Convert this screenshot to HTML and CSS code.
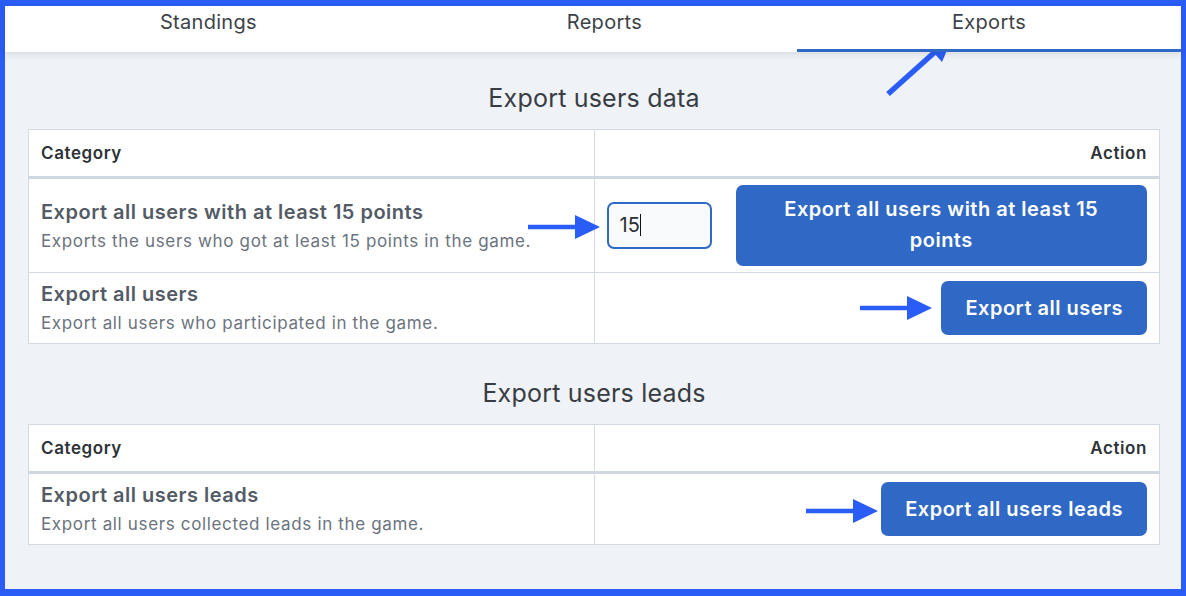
FILE: index.html
```html
<!DOCTYPE html>
<html lang="en">

<head>
  <meta charset="UTF-8" />
  <title>Game Admin - Exports</title>
  <link rel="stylesheet" href="styles.css">
</head>

<body>
  <div class="frame">
    <!-- Tabs -->
    <nav class="tabs">
      <a class="tab">Standings</a>
      <a class="tab">Reports</a>
      <a class="tab active">Exports</a>
    </nav>

    <main class="content">
      <!-- Users data -->
      <section class="export-block">
        <h2>Export users data</h2>
        <table class="export-table">
          <thead>
            <tr>
              <th>Category</th>
              <th class="action-col">Action</th>
            </tr>
          </thead>
          <tbody>
            <tr class="row-tall">
              <td>
                <div class="item-title">Export all users with at least 15 points</div>
                <div class="item-desc">Exports the users who got at least 15 points in the game.</div>
              </td>
              <td>
                <div class="actions">
                  <div class="points-input">15<span class="caret"></span></div>
                  <button class="btn btn-grow">Export all users with at least 15 points</button>
                </div>
              </td>
            </tr>
            <tr>
              <td>
                <div class="item-title">Export all users</div>
                <div class="item-desc">Export all users who participated in the game.</div>
              </td>
              <td>
                <div class="actions">
                  <button class="btn">Export all users</button>
                </div>
              </td>
            </tr>
          </tbody>
        </table>
      </section>

      <!-- Users leads -->
      <section class="export-block">
        <h2>Export users leads</h2>
        <table class="export-table">
          <thead>
            <tr>
              <th>Category</th>
              <th class="action-col">Action</th>
            </tr>
          </thead>
          <tbody>
            <tr>
              <td>
                <div class="item-title">Export all users leads</div>
                <div class="item-desc">Export all users collected leads in the game.</div>
              </td>
              <td>
                <div class="actions">
                  <button class="btn">Export all users leads</button>
                </div>
              </td>
            </tr>
          </tbody>
        </table>
      </section>
    </main>
  </div>

  <!-- annotation arrows drawn over the page -->
  <svg class="annotations" width="1186" height="596" viewBox="0 0 1186 596">
    <g fill="#2a5cf6" stroke="#2a5cf6">
      <line x1="888" y1="94" x2="936" y2="51" stroke-width="5.5" />
      <polygon points="953,36 926,44 942,62" stroke="none" />

      <line x1="528" y1="227" x2="578" y2="227" stroke-width="4.5" />
      <polygon points="575,215 600,227 575,239" stroke="none" />

      <line x1="860" y1="308" x2="910" y2="308" stroke-width="4.5" />
      <polygon points="907,296 932,308 907,320" stroke="none" />

      <line x1="806" y1="511" x2="856" y2="511" stroke-width="4.5" />
      <polygon points="853,499 878,511 853,523" stroke="none" />
    </g>
  </svg>
</body>

</html>
```

FILE: styles.css
```css
:root {
  --frame: #2a5cf6;
  --bg: #eff2f7;
  --line: #d3dae3;
  --primary: #3068c5;
  --text: #3b4046;
  --muted: #6b737e;
}
* {
  box-sizing: border-box;
  margin: 0;
  padding: 0;
}
body {
  position: relative;
  width: 1186px;
  height: 596px;
  overflow: hidden;
  font-family: Inter, "Noto Sans", sans-serif;
  color: var(--text);
}
.frame {
  height: 596px;
  border-style: solid;
  border-color: var(--frame);
  border-width: 6px 5px 7px 5px;
  background: var(--bg);
  display: flex;
  flex-direction: column;
}
/* Tabs */
.tabs {
  display: flex;
  background: #fff;
  box-shadow: 0 2px 7px rgba(30, 40, 60, 0.12);
  position: relative;
  z-index: 1;
}
.tab {
  flex: 1 0 auto;
  text-align: center;
  font-size: 20px;
  letter-spacing: 0.3px;
  line-height: 24px;
  padding: 4px 0 15px;
  border-bottom: 3px solid transparent;
  color: #3d4248;
}
.tab.active {
  border-bottom-color: var(--primary);
}
/* Content */
.content {
  padding: 0 21px 0 23px;
}
.export-block {
  padding-top: 30px;
}
.export-block + .export-block {
  padding-top: 33px;
}
.export-block h2 {
  text-align: center;
  font-size: 25px;
  letter-spacing: 0.2px;
  font-weight: 400;
  line-height: 32px;
  margin-bottom: 15px;
  color: #383d43;
}
.export-table {
  width: 100%;
  border-collapse: collapse;
  background: #fff;
  table-layout: fixed;
}
.export-table th,
.export-table td {
  border: 1px solid var(--line);
  padding: 6px 12px;
  vertical-align: middle;
}
.export-table th {
  text-align: left;
  font-size: 17px;
  letter-spacing: 0.6px;
  font-weight: 600;
  line-height: 32px;
  padding-top: 7px;
  padding-bottom: 7px;
  color: #2e3338;
  border-bottom: 3px solid #cfd7e0;
}
.export-table th.action-col {
  text-align: right;
}
.item-title {
  font-size: 20px;
  letter-spacing: 0.5px;
  font-weight: 600;
  line-height: 30px;
  color: #535b66;
}
.item-desc {
  font-size: 17px;
  letter-spacing: 0.65px;
  line-height: 28px;
  color: var(--muted);
}
.actions {
  display: flex;
  align-items: center;
  justify-content: flex-end;
  gap: 24px;
}
.points-input {
  width: 105px;
  height: 47px;
  flex: none;
  border: 2.5px solid var(--primary);
  border-radius: 7px;
  background: #f8fafc;
  font-size: 20px;
  line-height: 42px;
  padding-left: 11px;
  color: #2a2e33;
}
.caret {
  display: inline-block;
  width: 1.5px;
  height: 22px;
  background: #111;
  vertical-align: -4px;
}
.btn {
  font-family: inherit;
  font-size: 20px;
  letter-spacing: 0.5px;
  font-weight: 600;
  line-height: 28px;
  color: #fff;
  background: var(--primary);
  border: none;
  border-radius: 7px;
  padding: 13px 24px;
}
.btn-grow {
  flex: 1;
  padding: 9px 40px 10px;
  line-height: 31px;
}
.annotations {
  position: absolute;
  left: 0;
  top: 0;
  pointer-events: none;
}
```
